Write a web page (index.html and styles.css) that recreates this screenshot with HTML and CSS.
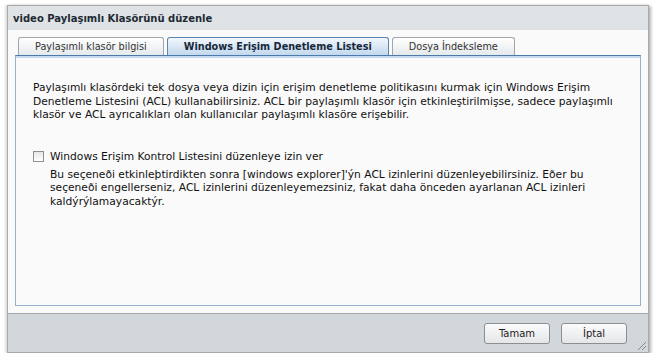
FILE: index.html
```html
<!DOCTYPE html>
<html lang="tr">
<head>
    <meta charset="utf-8" />
    <title>video Paylaşımlı Klasörünü düzenle</title>
    <link rel="stylesheet" href="styles.css">
</head>
<body>
  <div id="window">
      <div id="titlebar">video Paylaşımlı Klasörünü düzenle</div>
      <div id="content">
          <div class="tabs">
              <div class="tab">Paylaşımlı klasör bilgisi</div>
              <div class="tab active">Windows Erişim Denetleme Listesi</div>
              <div class="tab">Dosya İndeksleme</div>
          </div>
          <div class="panel">
              <p class="intro">Paylaşımlı klasördeki tek dosya veya dizin için erişim denetleme politikasını kurmak için Windows Erişim<br/>
              Denetleme Listesini (ACL) kullanabilirsiniz. ACL bir paylaşımlı klasör için etkinleştirilmişse, sadece paylaşımlı<br/>
              klasör ve ACL ayrıcalıkları olan kullanıcılar paylaşımlı klasöre erişebilir.</p>
              <label class="check-row"><span class="checkbox"></span>Windows Erişim Kontrol Listesini düzenleye izin ver</label>
              <p class="note">Bu seçeneði etkinleþtirdikten sonra [windows explorer]'ýn ACL izinlerini düzenleyebilirsiniz. Eðer bu<br/>
              seçeneði engellerseniz, ACL izinlerini düzenleyemezsiniz, fakat daha önceden ayarlanan ACL izinleri<br/>
              kaldýrýlamayacaktýr.</p>
          </div>
      </div>
      <div id="footer">
          <div class="button">Tamam</div>
          <div class="button">İptal</div>
          <div class="grip"></div>
      </div>
  </div>
</body>
</html>
```

FILE: styles.css
```css
body{
    margin: 0;
    background: #ffffff;
    font-family: "DejaVu Sans", Verdana, sans-serif;
    font-size: 10px;
    color: #111;
}

#window{
    margin: 5px 7px 0 7px;
    width: 640px;
    border: 1px solid #a9a9a9;
    box-shadow: -2px 0 2px rgba(0,0,0,0.12), 2px 1px 3px rgba(0,0,0,0.3);
}

#titlebar{
    height: 24px;
    line-height: 26px;
    padding-left: 5px;
    background: #dfe3e6;
    font-weight: bold;
    font-size: 10px;
    color: #1e2a33;
}

#content{
    background: #fafafa;
    padding: 7px 7px 7px 7px;
}

.tabs{
    display: flex;
    gap: 3px;
    padding-left: 3px;
}

.tab{
    height: 17px;
    line-height: 18px;
    padding: 0 16px;
    border: 1px solid #a2a6aa;
    border-bottom: none;
    border-radius: 3px 3px 0 0;
    background: linear-gradient(#ffffff, #e5e9ec);
    font-size: 9.7px;
    color: #333;
}

.tab.active{
    border-color: #5a86b2;
    background: linear-gradient(#f2f7fc, #c3d8ee);
    font-weight: bold;
    color: #16283a;
}

.panel{
    height: 249px;
    border: 1px solid #94b3d0;
    border-top: 1px solid #4c7bab;
    box-shadow: inset 0 2px 0 #c6dbef;
    padding: 0 17px;
    font-size: 10.7px;
}

.intro{
    margin: 25px 0 0 0;
    line-height: 13.5px;
}

.check-row{
    display: flex;
    align-items: center;
    gap: 6px;
    margin-top: 28px;
}

.checkbox{
    width: 9px;
    height: 9px;
    border: 1px solid #8f8f8f;
    background: linear-gradient(#e6e6e6, #ffffff);
}

.note{
    margin: 5px 0 0 17px;
    line-height: 13.5px;
}

#footer{
    height: 38px;
    border-top: 1px solid #a6a6a6;
    background: #d2d7db;
    display: flex;
    align-items: center;
    justify-content: flex-end;
    gap: 11px;
    padding-right: 21px;
    position: relative;
}

.button{
    width: 64px;
    height: 19px;
    line-height: 19px;
    text-align: center;
    border: 1px solid #8c8f92;
    border-radius: 3px;
    background: linear-gradient(#fbfbfb, #e4e6e8);
    color: #222;
}

.grip{
    position: absolute;
    right: 2px;
    bottom: 2px;
    width: 8px;
    height: 8px;
    background: linear-gradient(135deg, transparent 45%, #888 45%, #888 55%, transparent 55%, transparent 70%, #888 70%, #888 80%, transparent 80%);
}
```
